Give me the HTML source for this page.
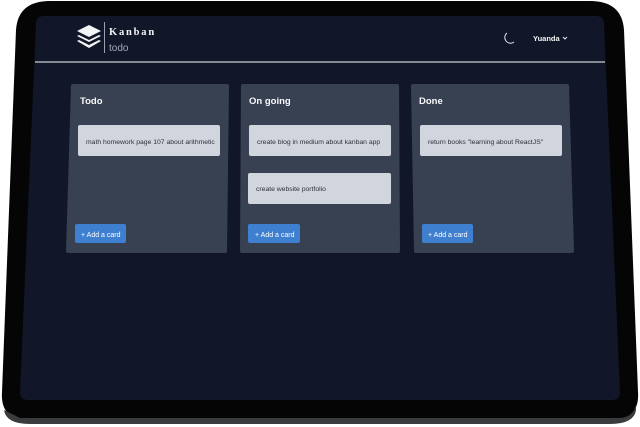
<!DOCTYPE html>
<html><head><meta charset="utf-8"><style>
html,body{margin:0;padding:0;background:#fff;width:640px;height:427px;overflow:hidden}
svg{display:block}
text{font-family:"Liberation Sans",sans-serif}
</style></head><body>
<svg width="640" height="427" viewBox="0 0 640 427" xmlns="http://www.w3.org/2000/svg">
<path d="M50 1 L590 1 Q622 1 624 30 L638 392 Q640 420 610 422 L30 422 Q0 420 2 392 L16 30 Q18 1 50 1 Z" fill="#050506"/>
<path d="M20 418 L620 418 Q634 417 636 404 L636 410 Q634 424 610 424 L30 424 Q6 424 4 410 Z" fill="#3a3b3e"/>
<path d="M44 16 L596 16 Q604 16 604 24 L620 392 Q620 400 612 400 L28 400 Q20 400 20 392 L36 24 Q36 16 44 16 Z" fill="#111729"/>
<line x1="35" y1="62" x2="605" y2="62" stroke="#c9ccd3" stroke-width="1.3"/>
<g fill="#f2f3f5">
<path d="M89 25 L101 31 L89 37 L77 31 Z"/>
<path d="M79 35 L89 40 L99 35 L101 36 L89 42 L77 36 Z"/>
<path d="M79 40 L89 45 L99 40 L101 41 L89 48 L77 41 Z"/>
</g>
<line x1="104.5" y1="22" x2="104.5" y2="53" stroke="#9aa0ad" stroke-width="1"/>
<text x="109" y="35" fill="#f3f4f6" font-weight="bold" font-size="10.5" letter-spacing="1.8" style="font-family:'Liberation Serif',serif">Kanban</text>
<text x="109" y="51" fill="#a5abb8" font-size="10">todo</text>
<path d="M507 33 A5 5 0 1 0 514 42 A5.5 5.5 0 0 1 507 33 Z" fill="none" stroke="#e5e7eb" stroke-width="1"/>
<text x="533" y="41" fill="#f3f4f6" font-size="7.5" font-weight="bold">Yuanda</text>
<path d="M563 37 L565 39 L567 37" fill="none" stroke="#e5e7eb" stroke-width="1"/>
<path d="M73 84 L227 84 Q229 84 229 86 L227 251 Q227 253 225 253 L68 253 Q66 253 66 251 L71 86 Q71 84 73 84 Z" fill="#374151"/>
<path d="M243 84 L397 84 Q399 84 399 86 L400 251 Q400 253 398 253 L242 253 Q240 253 240 251 L241 86 Q241 84 243 84 Z" fill="#374151"/>
<path d="M413 84 L567 84 Q569 84 569 86 L574 251 Q574 253 572 253 L416 253 Q414 253 414 251 L411 86 Q411 84 413 84 Z" fill="#374151"/>
<g fill="#f9fafb" font-size="9.5" font-weight="bold">
<text x="80" y="104">Todo</text>
<text x="249" y="104">On going</text>
<text x="419" y="104">Done</text>
</g>
<g fill="#d1d5de">
<rect x="78" y="125" width="142" height="31" rx="2"/>
<rect x="249" y="125" width="142" height="31" rx="2"/>
<rect x="248" y="173" width="143" height="31" rx="2"/>
<rect x="420" y="125" width="142" height="31" rx="2"/>
</g>
<g fill="#2b303a" font-size="6.8">
<text x="86" y="144">math homework page 107 about arithmetic</text>
<text x="257" y="144">create blog in medium about kanban app</text>
<text x="256" y="191">create website portfolio</text>
<text x="428" y="144">return books "learning about ReactJS"</text>
</g>
<g fill="#3f7fd0">
<rect x="75" y="224" width="51" height="19" rx="2"/>
<rect x="248" y="224" width="52" height="19" rx="2"/>
<rect x="422" y="224" width="51" height="19" rx="2"/>
</g>
<g fill="#ffffff" font-size="7">
<text x="81" y="237">+ Add a card</text>
<text x="255" y="237">+ Add a card</text>
<text x="428" y="237">+ Add a card</text>
</g>
</svg>
</body></html>
